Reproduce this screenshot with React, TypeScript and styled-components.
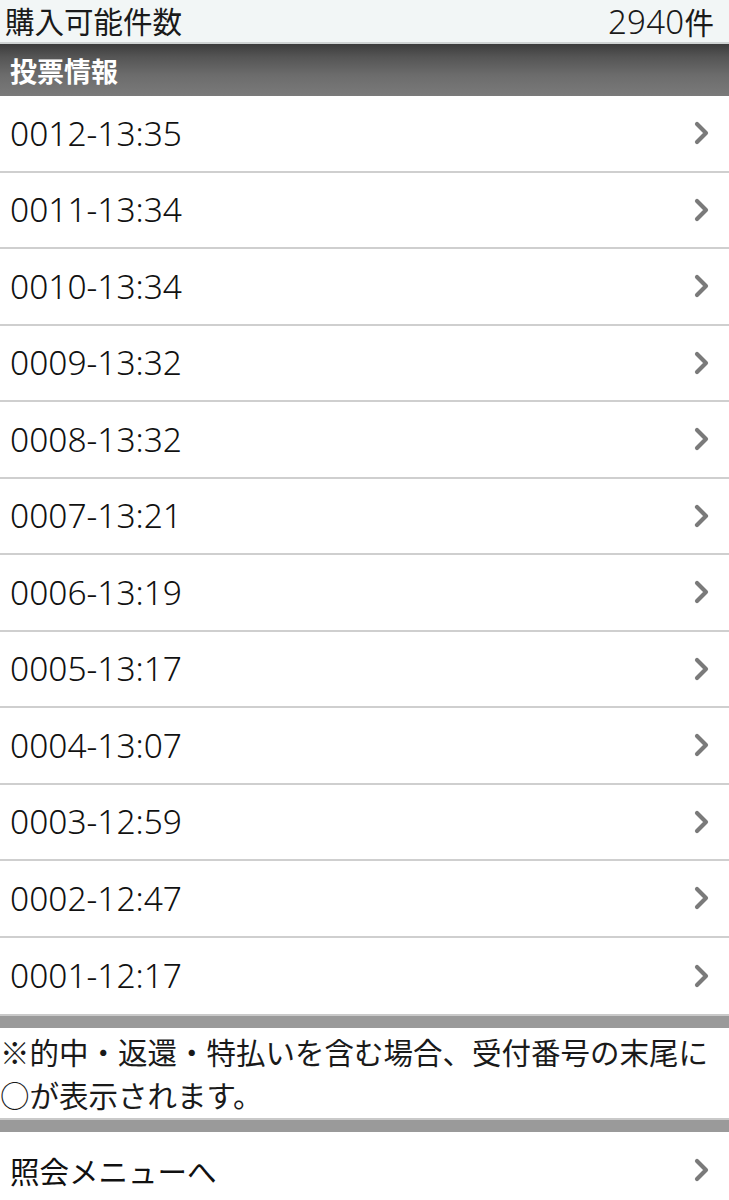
import React from "react";
import styled, { createGlobalStyle } from "styled-components";

const Global = createGlobalStyle`
  html, body { margin: 0; padding: 0; background: #fff; }
  body { font-family: "Noto Sans CJK JP", "Noto Sans", sans-serif; color: #111; }
`;

const Page = styled.div`
  width: 729px;
  display: flex;
  flex-direction: column;
`;

const SummaryBar = styled.div`
  height: 44px;
  box-sizing: border-box;
  display: flex;
  align-items: center;
  justify-content: space-between;
  padding: 0 15px 0 5px;
  background: #f2f6f6;
  border-bottom: 2px solid #cfd3d3;
  font-size: 29.5px;
  line-height: 1;
  color: #1a1a1a;
`;

const Count = styled.span`
  display: flex;
  align-items: baseline;
`;

const Digits = styled.span`
  font-family: "Noto Sans", sans-serif;
  font-weight: 300;
  font-size: 33px;
  letter-spacing: 0.3px;
`;

const SectionHeader = styled.div`
  height: 52px;
  box-sizing: border-box;
  display: flex;
  align-items: center;
  padding-left: 10px;
  background: linear-gradient(#3c3c3c 0%, #555 25%, #6c6c6c 60%, #7a7a7a 100%);
  color: #fff;
  font-weight: 700;
  font-size: 27px;
  line-height: 1;
`;

const List = styled.div`
  display: flex;
  flex-direction: column;
`;

const Row = styled.div<{ $last?: boolean }>`
  height: 76.5px;
  box-sizing: border-box;
  display: flex;
  align-items: center;
  justify-content: space-between;
  padding: 0 18px 0 10px;
  border-bottom: ${(p) => (p.$last ? "none" : "2px solid #cfcfcf")};
  background: #fff;
`;

const RowLabel = styled.span<{ $cjk?: boolean }>`
  font-family: ${(p) =>
    p.$cjk ? `"Noto Sans CJK JP", sans-serif` : `"Noto Sans", "Noto Sans CJK JP", sans-serif`};
  font-size: ${(p) => (p.$cjk ? "29.5px" : "33.5px")};
  font-weight: ${(p) => (p.$cjk ? 400 : 300)};
  color: #111;
  line-height: 1;
`;

const Divider = styled.div`
  height: 14px;
  box-sizing: border-box;
  background: #9a9a9a;
  border-top: 2px solid #c9c9c9;
`;

const Note = styled.p`
  margin: 0;
  padding: 2px 0 2px 0;
  font-size: 29.5px;
  line-height: 43px;
  color: #1a1a1a;
  white-space: nowrap;
`;

const Chevron = () => (
  <svg width="18" height="24" viewBox="0 0 18 24" aria-hidden>
    <polyline
      points="4,3 13,12 4,21"
      fill="none"
      stroke="#7a7a7a"
      strokeWidth="4.2"
      strokeLinecap="round"
      strokeLinejoin="round"
    />
  </svg>
);

const items = [
  "0012-13:35",
  "0011-13:34",
  "0010-13:34",
  "0009-13:32",
  "0008-13:32",
  "0007-13:21",
  "0006-13:19",
  "0005-13:17",
  "0004-13:07",
  "0003-12:59",
  "0002-12:47",
  "0001-12:17",
];

export default function App() {
  return (
    <Page>
      <Global />
      <SummaryBar>
        <span>購入可能件数</span>
        <Count>
          <Digits>2940</Digits>件
        </Count>
      </SummaryBar>
      <SectionHeader>投票情報</SectionHeader>
      <List>
        {items.map((t, i) => (
          <Row key={t} $last={i === items.length - 1}>
            <RowLabel>{t}</RowLabel>
            <Chevron />
          </Row>
        ))}
      </List>
      <Divider />
      <Note>
        ※的中・返還・特払いを含む場合、受付番号の末尾に
        <br />
        ○が表示されます。
      </Note>
      <Divider />
      <Row $last>
        <RowLabel $cjk>照会メニューへ</RowLabel>
        <Chevron />
      </Row>
    </Page>
  );
}
